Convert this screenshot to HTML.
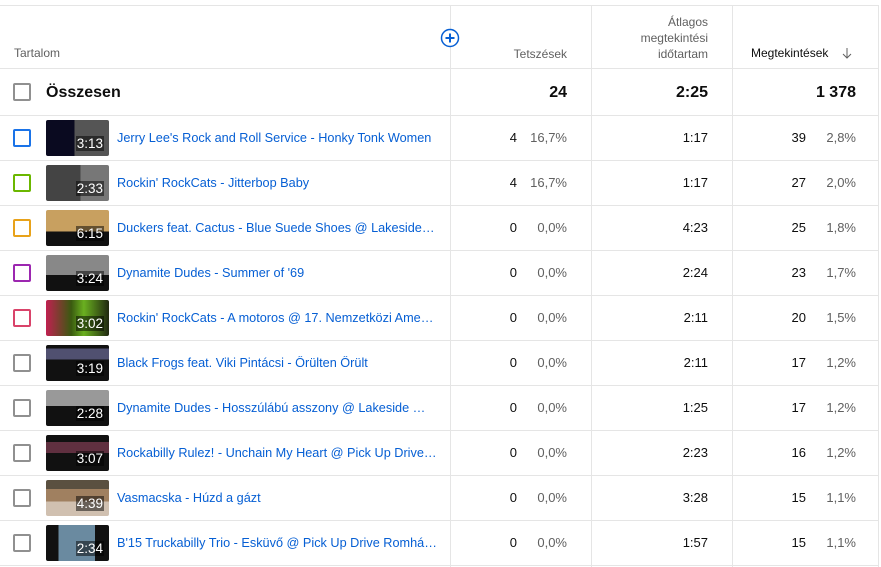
<!DOCTYPE html>
<html><head><meta charset="utf-8"><style>
*{margin:0;padding:0;box-sizing:border-box}
body{width:881px;height:567px;background:#fff;font-family:"Liberation Sans",Arial,sans-serif;position:relative;overflow:hidden;color:#0d0d0d}
.h{position:absolute;left:0;width:879px;height:1px;background:#e5e5e5}
.v{position:absolute;width:1px;top:5px;height:562px;background:#e5e5e5}
.a{position:absolute;white-space:nowrap}
.cb{position:absolute;left:13px;width:18px;height:18px;border:2px solid #909090;border-radius:2px}
.th{position:absolute;left:46px;width:63px;height:36px;border-radius:2px;overflow:hidden;background:#111}
.th .d{position:absolute;right:5px;bottom:5px;color:#fff;font-size:13.5px;background:rgba(0,0,0,.5);padding:0 1px;line-height:15px}
.t{position:absolute;left:117px;font-size:12.7px;color:#065fd4;white-space:nowrap;max-width:320px;overflow:hidden;text-overflow:ellipsis}
.n{position:absolute;font-size:13px;color:#0d0d0d;text-align:right}
.p{position:absolute;font-size:13px;color:#606060;text-align:right}
.hd{position:absolute;font-size:12px;color:#606060;text-align:right;line-height:16px}
</style></head><body>
<div class="h" style="top:5px"></div>
<div class="h" style="top:68px"></div>
<div class="h" style="top:115px"></div>
<div class="h" style="top:160px"></div>
<div class="h" style="top:205px"></div>
<div class="h" style="top:250px"></div>
<div class="h" style="top:295px"></div>
<div class="h" style="top:340px"></div>
<div class="h" style="top:385px"></div>
<div class="h" style="top:430px"></div>
<div class="h" style="top:475px"></div>
<div class="h" style="top:520px"></div>
<div class="h" style="top:565px"></div>
<div class="v" style="left:450px"></div>
<div class="v" style="left:591px"></div>
<div class="v" style="left:732px"></div>
<div class="v" style="left:878px"></div>

<div class="a" style="left:14px;top:46px;font-size:12px;color:#606060">Tartalom</div>
<svg class="a" style="left:440px;top:28px" width="20" height="20" viewBox="0 0 20 20"><circle cx="10" cy="10" r="8.5" fill="#fff" stroke="#065fd4" stroke-width="1.5"/><path d="M10 5.5v9M5.5 10h9" stroke="#065fd4" stroke-width="2"/></svg>
<div class="hd" style="right:314px;top:46px">Tetszések</div>
<div class="hd" style="right:173px;top:14px">Átlagos<br>megtekintési<br>időtartam</div>
<div class="a" style="left:751px;top:46px;font-size:12px;color:#0d0d0d">Megtekintések</div>
<svg class="a" style="left:841px;top:47px" width="12" height="12" viewBox="0 0 12 12"><path d="M6 1v10M2 7l4 4 4-4" fill="none" stroke="#606060" stroke-width="1"/></svg>

<div class="cb" style="top:83px"></div>
<div class="a" style="left:46px;top:84px;font-size:16px;font-weight:bold">Összesen</div>
<div class="n" style="right:314px;top:84px;font-size:16px;font-weight:bold">24</div>
<div class="n" style="right:173px;top:84px;font-size:16px;font-weight:bold">2:25</div>
<div class="n" style="right:25px;top:84px;font-size:16px;font-weight:bold">1 378</div>

<div class="cb" style="top:129px;border-color:#1a73e8"></div>
<div class="th" style="top:120px;background:linear-gradient(90deg,#0a0a20 0 45%,#555 45% 100%)"><span class="d">3:13</span></div>
<div class="t" style="top:131px">Jerry Lee's Rock and Roll Service - Honky Tonk Women</div>
<div class="n" style="right:364px;top:130px">4</div><div class="p" style="right:314px;top:130px">16,7%</div>
<div class="n" style="right:173px;top:130px">1:17</div>
<div class="n" style="right:75px;top:130px">39</div><div class="p" style="right:25px;top:130px">2,8%</div>

<div class="cb" style="top:174px;border-color:#6bb700"></div>
<div class="th" style="top:165px;background:linear-gradient(90deg,#444 0 55%,#777 55% 100%)"><span class="d">2:33</span></div>
<div class="t" style="top:176px">Rockin' RockCats - Jitterbop Baby</div>
<div class="n" style="right:364px;top:175px">4</div><div class="p" style="right:314px;top:175px">16,7%</div>
<div class="n" style="right:173px;top:175px">1:17</div>
<div class="n" style="right:75px;top:175px">27</div><div class="p" style="right:25px;top:175px">2,0%</div>

<div class="cb" style="top:219px;border-color:#e8a21a"></div>
<div class="th" style="top:210px;background:linear-gradient(180deg,#c8a060 0 60%,#111 60%)"><span class="d">6:15</span></div>
<div class="t" style="top:221px">Duckers feat. Cactus - Blue Suede Shoes @ Lakeside Western Hotel</div>
<div class="n" style="right:364px;top:220px">0</div><div class="p" style="right:314px;top:220px">0,0%</div>
<div class="n" style="right:173px;top:220px">4:23</div>
<div class="n" style="right:75px;top:220px">25</div><div class="p" style="right:25px;top:220px">1,8%</div>

<div class="cb" style="top:264px;border-color:#9c27b0"></div>
<div class="th" style="top:255px;background:linear-gradient(180deg,#888 0 55%,#111 55%)"><span class="d">3:24</span></div>
<div class="t" style="top:266px">Dynamite Dudes - Summer of '69</div>
<div class="n" style="right:364px;top:265px">0</div><div class="p" style="right:314px;top:265px">0,0%</div>
<div class="n" style="right:173px;top:265px">2:24</div>
<div class="n" style="right:75px;top:265px">23</div><div class="p" style="right:25px;top:265px">1,7%</div>

<div class="cb" style="top:309px;border-color:#d9436a"></div>
<div class="th" style="top:300px;background:linear-gradient(90deg,#c02050 0,#3a5a10 40%,#6ab020 60%,#202810)"><span class="d">3:02</span></div>
<div class="t" style="top:311px">Rockin' RockCats - A motoros @ 17. Nemzetközi Amerikai Autó</div>
<div class="n" style="right:364px;top:310px">0</div><div class="p" style="right:314px;top:310px">0,0%</div>
<div class="n" style="right:173px;top:310px">2:11</div>
<div class="n" style="right:75px;top:310px">20</div><div class="p" style="right:25px;top:310px">1,5%</div>

<div class="cb" style="top:354px"></div>
<div class="th" style="top:345px;background:linear-gradient(180deg,#111 0 10%,#505070 10% 40%,#111 40%)"><span class="d">3:19</span></div>
<div class="t" style="top:356px">Black Frogs feat. Viki Pintácsi - Őrülten Őrült</div>
<div class="n" style="right:364px;top:355px">0</div><div class="p" style="right:314px;top:355px">0,0%</div>
<div class="n" style="right:173px;top:355px">2:11</div>
<div class="n" style="right:75px;top:355px">17</div><div class="p" style="right:25px;top:355px">1,2%</div>

<div class="cb" style="top:399px"></div>
<div class="th" style="top:390px;background:linear-gradient(180deg,#999 0 45%,#111 45%)"><span class="d">2:28</span></div>
<div class="t" style="top:401px">Dynamite Dudes - Hosszúlábú asszony @ Lakeside Western Hotel</div>
<div class="n" style="right:364px;top:400px">0</div><div class="p" style="right:314px;top:400px">0,0%</div>
<div class="n" style="right:173px;top:400px">1:25</div>
<div class="n" style="right:75px;top:400px">17</div><div class="p" style="right:25px;top:400px">1,2%</div>

<div class="cb" style="top:444px"></div>
<div class="th" style="top:435px;background:linear-gradient(180deg,#111 0 20%,#603040 20% 50%,#111 50%)"><span class="d">3:07</span></div>
<div class="t" style="top:446px">Rockabilly Rulez! - Unchain My Heart @ Pick Up Drive Romhány</div>
<div class="n" style="right:364px;top:445px">0</div><div class="p" style="right:314px;top:445px">0,0%</div>
<div class="n" style="right:173px;top:445px">2:23</div>
<div class="n" style="right:75px;top:445px">16</div><div class="p" style="right:25px;top:445px">1,2%</div>

<div class="cb" style="top:489px"></div>
<div class="th" style="top:480px;background:linear-gradient(180deg,#5a5040 0 25%,#a08060 25% 60%,#d0c0b0 60%)"><span class="d">4:39</span></div>
<div class="t" style="top:491px">Vasmacska - Húzd a gázt</div>
<div class="n" style="right:364px;top:490px">0</div><div class="p" style="right:314px;top:490px">0,0%</div>
<div class="n" style="right:173px;top:490px">3:28</div>
<div class="n" style="right:75px;top:490px">15</div><div class="p" style="right:25px;top:490px">1,1%</div>

<div class="cb" style="top:534px"></div>
<div class="th" style="top:525px;background:linear-gradient(90deg,#111 0 20%,#6a8aa0 20% 78%,#111 78%)"><span class="d">2:34</span></div>
<div class="t" style="top:536px">B'15 Truckabilly Trio - Esküvő @ Pick Up Drive Romhány</div>
<div class="n" style="right:364px;top:535px">0</div><div class="p" style="right:314px;top:535px">0,0%</div>
<div class="n" style="right:173px;top:535px">1:57</div>
<div class="n" style="right:75px;top:535px">15</div><div class="p" style="right:25px;top:535px">1,1%</div>
</body></html>
